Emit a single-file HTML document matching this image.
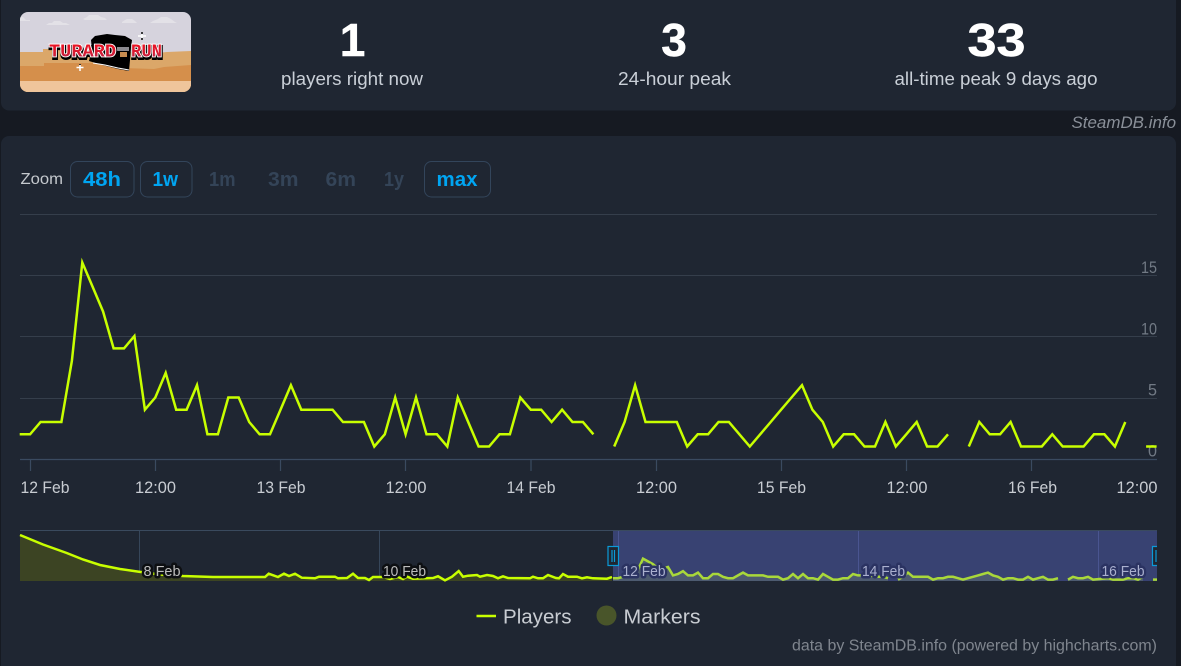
<!DOCTYPE html>
<html><head><meta charset="utf-8"><style>
html,body{margin:0;padding:0;background:#161a22;width:1181px;height:666px;overflow:hidden}
svg{display:block}
text{font-family:"Liberation Sans",sans-serif}
</style></head><body>
<svg width="1181" height="666" viewBox="0 0 1181 666" xmlns="http://www.w3.org/2000/svg">
<defs>
<clipPath id="th"><rect x="20" y="12" width="171" height="80" rx="8"/></clipPath>
<linearGradient id="tg" x1="0" y1="0" x2="0" y2="1"><stop offset="0" stop-color="#ee0f1e"/><stop offset=".55" stop-color="#d41c34"/><stop offset="1" stop-color="#96305f"/></linearGradient>
</defs>
<rect x="1" y="-10" width="1175" height="120.500" rx="8" fill="#1f2632"/>
<rect x="1" y="136" width="1175" height="540" rx="8" fill="#1f2632"/>

<g clip-path="url(#th)">
<rect x="20" y="12" width="171" height="80" fill="#d6d3dd"/>
<path d="M20 17l3 0 3 3h4v1H20z" fill="#e3e1e7"/>
<path d="M46 25l3-2h3l2-2h6l3 2h3l4 2z" fill="#e3e1e7"/>
<path d="M83 19l4-2 2-2h9l3 2 4 1 2 2-3 0H85z" fill="#e3e1e7"/>
<path d="M122 22l3-2 2-1h5l3 2 2 2h-15z" fill="#e3e1e7"/>
<path d="M150 23l3-2 5-2 3-2h6l4 2 4 3 2 1h-27z" fill="#e3e1e7"/>
<path d="M20 52h23v-3h40v3h60l14 1 10-1 24-1v41H20z" fill="#dba769"/>
<path d="M20 66h24v-3h20v0h60v5l30 1 10-2 27-2v27H20z" fill="#d58f4b"/>
<rect x="20" y="81" width="171" height="11" fill="#efc59b"/>
<path d="M91 40L95 36 107 34 115 35 125 36 132 40 131 48 130 60 129 71 118 69 102 65 89 61 92 50z" fill="#000"/>
<path d="M93 63l12 2 13 3 11 2" fill="none" stroke="#fff" stroke-width="1"/>
<rect x="117" y="47" width="12" height="4" fill="#8d8b90"/>
<rect x="120" y="52" width="7" height="5" fill="#c98d50"/>
<path d="M142 32v8M138 36h8M80 64v7M76.500 67.500h7" stroke="#fff" stroke-width="1.500"/>
<path d="M142 32v2M142 38v2M80 64v1" stroke="#000" stroke-width="1.500"/>
<g font-size="18" font-weight="700" style="font-family:'Liberation Mono',monospace">
<text x="49.500" y="58.500" textLength="67" lengthAdjust="spacingAndGlyphs" fill="#000" stroke="#000" stroke-width="3" style="font-family:'Liberation Mono',monospace">TURARD</text>
<text x="131.500" y="58.500" textLength="31" lengthAdjust="spacingAndGlyphs" fill="#000" stroke="#000" stroke-width="3" style="font-family:'Liberation Mono',monospace">RUN</text>
<text x="49" y="56.500" textLength="67" lengthAdjust="spacingAndGlyphs" fill="url(#tg)" stroke="#fff" stroke-width="1.800" paint-order="stroke" style="font-family:'Liberation Mono',monospace">TURARD</text>
<text x="131" y="56.500" textLength="31" lengthAdjust="spacingAndGlyphs" fill="url(#tg)" stroke="#fff" stroke-width="1.800" paint-order="stroke" style="font-family:'Liberation Mono',monospace">RUN</text>
</g>
</g>

<g text-anchor="middle" fill="#fff" font-weight="700" font-size="46" stroke="#fff" stroke-width=".5">
<text x="352.500" y="56">1</text>
<text x="674" y="56">3</text>
<text x="996.500" y="56" textLength="58" lengthAdjust="spacingAndGlyphs">33</text>
</g>
<g fill="#c9cfd7" font-size="18.500">
<text x="281" y="85" textLength="142" lengthAdjust="spacingAndGlyphs">players right now</text>
<text x="618" y="85" textLength="113" lengthAdjust="spacingAndGlyphs">24-hour peak</text>
<text x="894.500" y="85" textLength="203" lengthAdjust="spacingAndGlyphs">all-time peak 9 days ago</text>
</g>
<text x="1071.500" y="128" font-size="16.500" font-style="italic" fill="#8a9099" textLength="104.500" lengthAdjust="spacingAndGlyphs">SteamDB.info</text>

<text x="20.500" y="184" font-size="16" fill="#c5c9ce" textLength="42.500" lengthAdjust="spacingAndGlyphs">Zoom</text>
<g fill="none" stroke="#33455b" stroke-width="1">
<rect x="70.500" y="161.500" width="63.500" height="35.500" rx="7"/>
<rect x="140.500" y="161.500" width="51.500" height="35.500" rx="7"/>
<rect x="424.500" y="161.500" width="66" height="35.500" rx="7"/>
</g>
<g font-size="20.500" font-weight="700">
<g fill="#00a5f2">
<text x="83" y="186" textLength="38" lengthAdjust="spacingAndGlyphs">48h</text>
<text x="152.500" y="186" textLength="25.500" lengthAdjust="spacingAndGlyphs">1w</text>
<text x="436.500" y="186" textLength="41" lengthAdjust="spacingAndGlyphs">max</text>
</g>
<g fill="#344458">
<text x="209" y="186" textLength="26.500" lengthAdjust="spacingAndGlyphs">1m</text>
<text x="268" y="186" textLength="30.500" lengthAdjust="spacingAndGlyphs">3m</text>
<text x="325.500" y="186" textLength="30.500" lengthAdjust="spacingAndGlyphs">6m</text>
<text x="384" y="186" textLength="20" lengthAdjust="spacingAndGlyphs">1y</text>
</g>
</g>

<path d="M20 214.500H1157M20 275.500H1157M20 336.500H1157M20 398.500H1157" stroke="#353e4b" stroke-width="1"/>
<path d="M20 459.500H1157" stroke="#3a4a60" stroke-width="1.200"/>
<path d="M30.500 460V471M155.500 460V471M280.500 460V471M405.500 460V471M531 460V471M656.500 460V471M781.500 460V471M906.500 460V471M1031.500 460V471" stroke="#3a4a60" stroke-width="1.200"/>
<g fill="#727a85" font-size="17">
<text x="1141" y="273" textLength="16" lengthAdjust="spacingAndGlyphs">15</text>
<text x="1141" y="334.500" textLength="16" lengthAdjust="spacingAndGlyphs">10</text>
<text x="1148" y="395.500" textLength="9" lengthAdjust="spacingAndGlyphs">5</text>
<text x="1148" y="456.500" textLength="9" lengthAdjust="spacingAndGlyphs">0</text>
</g>
<g fill="#c8ccd2" font-size="17">
<text x="20.500" y="493" textLength="49" lengthAdjust="spacingAndGlyphs">12 Feb</text>
<text x="135" y="493" textLength="41" lengthAdjust="spacingAndGlyphs">12:00</text>
<text x="256.500" y="493" textLength="49" lengthAdjust="spacingAndGlyphs">13 Feb</text>
<text x="385.500" y="493" textLength="41" lengthAdjust="spacingAndGlyphs">12:00</text>
<text x="506.500" y="493" textLength="49" lengthAdjust="spacingAndGlyphs">14 Feb</text>
<text x="636" y="493" textLength="41" lengthAdjust="spacingAndGlyphs">12:00</text>
<text x="757" y="493" textLength="49" lengthAdjust="spacingAndGlyphs">15 Feb</text>
<text x="886.500" y="493" textLength="41" lengthAdjust="spacingAndGlyphs">12:00</text>
<text x="1008" y="493" textLength="49" lengthAdjust="spacingAndGlyphs">16 Feb</text>
<text x="1116.500" y="493" textLength="41" lengthAdjust="spacingAndGlyphs">12:00</text>
</g>

<g fill="none" stroke="#c8ff00" stroke-width="2.500" stroke-linejoin="miter" transform="translate(-.3,-.7)">
<polyline points="20,435 30.400,435 40.900,422.700 51.300,422.700 61.700,422.700 72.200,361.400 82.600,263.200 93,287.700 103.400,312.300 113.900,349.100 124.300,349.100 134.700,336.800 145.200,410.400 155.600,398.200 166,373.600 176.500,410.400 186.900,410.400 197.300,385.900 207.700,435 218.200,435 228.600,398.200 239,398.200 249.500,422.700 259.900,435 270.300,435 280.800,410.400 291.200,385.900 301.600,410.400 312,410.400 322.500,410.400 332.900,410.400 343.300,422.700 353.800,422.700 364.200,422.700 374.600,447.200 385.100,435 395.500,398.200 405.900,435 416.300,398.200 426.800,435 437.200,435 447.600,447.200 458.100,398.200 468.500,422.700 478.900,447.200 489.400,447.200 499.800,435 510.200,435 520.600,398.200 531.100,410.400 541.500,410.400 551.900,422.700 562.400,410.400 572.800,422.700 583.200,422.700 593.700,435"/>
<polyline points="614.500,447.200 624.900,422.700 635.400,385.900 645.800,422.700 656.200,422.700 666.700,422.700 677.100,422.700 687.500,447.200 698,435 708.400,435 718.800,422.700 729.200,422.700 739.700,435 750.100,447.200 760.500,435 771,422.700 781.400,410.400 791.800,398.200 802.300,385.900 812.700,410.400 823.100,422.700 833.500,447.200 844,435 854.400,435 864.800,447.200 875.300,447.200 885.700,422.700 896.100,447.200 906.600,435 917,422.700 927.400,447.200 937.800,447.200 948.300,435"/>
<polyline points="969.100,447.200 979.600,422.700 990,435 1000.400,435 1010.900,422.700 1021.300,447.200 1031.700,447.200 1042.100,447.200 1052.600,435 1063,447.200 1073.400,447.200 1083.900,447.200 1094.300,435 1104.700,435 1115.200,447.200 1125.600,422.700"/>
<polyline points="1146.400,447.200 1156.900,447.200"/>
</g>

<!-- navigator -->
<rect x="613" y="531" width="544" height="50" fill="#384272"/>
<path d="M20 530.500H1157" stroke="#3a4a5e" stroke-width="1"/>
<path d="M139.500 531V581M379.500 531V581" stroke="#36465a" stroke-width="1"/>
<path d="M618.500 531V581M858.500 531V581M1098.500 531V581" stroke="#4a5590" stroke-width="1"/>

<path d="M20 535L43 544.500 66.700 553 83 559.500 100 565 120 569 139 571.700 160 574.500 183 576 213 577 265 577 268.700 573.700 278 577 284 573.700 289 576 295 573.700 301.700 577.700 315 578.300 319 576.700 335 576.700 338 578.300 347 578 353 573.700 358 578 365 578 369 580 373 577 383 577 390 579 398 577 403 579 407 576.700 413 578.700 425 578.300 433 578 438 576.300 445 580.300 452 576.700 458.700 571 463 576.700 468 575.700 477 575 480 576.700 487 575 493 576 498 578.300 503 576.300 508 578 530 578.300 533 576.700 538 578.300 543 578.300 548 575 556 578 559 578.300 563 574 568 576.700 577 576.700 582 578.300 587 577.300 593 578.300 607 578.700 612 577V581H20Z" fill="#3c4423"/>
<path d="M613 578.200L618 578.200 623 576.800 633 576.800 638 569.800 643 558.600 648 561.400 653 564.200 658 568.400 663 568.400 668 567 673 575.400 678 574 683 571.200 688 575.400 693 575.400 698 572.600 703 578.200 708 578.200 713 574 718 574 723 576.800 728 578.200 733 578.200 738 575.400 743 572.600 748 575.400 763 575.400 768 576.800 778 576.800 783 579.600 788 578.200 793 574 798 578.200 803 574 808 578.200 813 578.200 818 579.600 823 574 828 576.800 833 579.600 838 579.600 843 578.200 848 578.200 853 574 858 575.400 863 575.400 868 576.800 873 575.400 878 576.800 883 576.800 888 578.200V581H613Z" fill="#4d5b70"/>
<path d="M898 579.600L903 576.800 908 572.600 913 576.800 928 576.800 933 579.600 938 578.200 943 578.200 948 576.800 953 576.800 958 578.200 963 579.600 968 578.200 973 576.800 978 575.400 983 574 988 572.600 993 575.400 998 576.800 1003 579.600 1008 578.200 1013 578.200 1018 579.600 1023 579.600 1028 576.800 1033 579.600 1038 578.200 1043 576.800 1048 579.600 1053 579.600 1058 578.200V581H898Z" fill="#4d5b70"/>
<path d="M1068 579.600L1073 576.800 1078 578.200 1083 578.200 1088 576.800 1093 579.600 1108 578.200 1113 579.600 1123 579.600 1128 578.200 1133 578.200 1138 579.600 1143 576.800V581H1068Z" fill="#4d5b70"/>

<polyline fill="none" stroke="#c8ff00" stroke-width="2.500" points="20,535 43,544.500 66.700,553 83,559.500 100,565 120,569 139,571.700 160,574.500 183,576 213,577 265,577 268.700,573.700 278,577 284,573.700 289,576 295,573.700 301.700,577.700 315,578.300 319,576.700 335,576.700 338,578.300 347,578 353,573.700 358,578 365,578 369,580 373,577 383,577 390,579 398,577 403,579 407,576.700 413,578.700 425,578.300 433,578 438,576.300 445,580.300 452,576.700 458.700,571 463,576.700 468,575.700 477,575 480,576.700 487,575 493,576 498,578.300 503,576.300 508,578 530,578.300 533,576.700 538,578.300 543,578.300 548,575 556,578 559,578.300 563,574 568,576.700 577,576.700 582,578.300 587,577.300 593,578.300 607,578.700 612,577"/>
<g fill="none" stroke="#a9d83a" stroke-width="2.500">
<polyline points="613,578.200 618,578.200 623,576.800 633,576.800 638,569.800 643,558.600 648,561.400 653,564.200 658,568.400 663,568.400 668,567 673,575.400 678,574 683,571.200 688,575.400 693,575.400 698,572.600 703,578.200 708,578.200 713,574 718,574 723,576.800 728,578.200 733,578.200 738,575.400 743,572.600 748,575.400 763,575.400 768,576.800 778,576.800 783,579.600 788,578.200 793,574 798,578.200 803,574 808,578.200 813,578.200 818,579.600 823,574 828,576.800 833,579.600 838,579.600 843,578.200 848,578.200 853,574 858,575.400 863,575.400 868,576.800 873,575.400 878,576.800 883,576.800 888,578.200"/>
<polyline points="898,579.600 903,576.800 908,572.600 913,576.800 928,576.800 933,579.600 938,578.200 943,578.200 948,576.800 953,576.800 958,578.200 963,579.600 968,578.200 973,576.800 978,575.400 983,574 988,572.600 993,575.400 998,576.800 1003,579.600 1008,578.200 1013,578.200 1018,579.600 1023,579.600 1028,576.800 1033,579.600 1038,578.200 1043,576.800 1048,579.600 1053,579.600 1058,578.200"/>
<polyline points="1068,579.600 1073,576.800 1078,578.200 1083,578.200 1088,576.800 1093,579.600 1108,578.200 1113,579.600 1123,579.600 1128,578.200 1133,578.200 1138,579.600 1143,576.800"/>
<polyline points="1153,579.600 1157,579.600"/>
</g>

<g font-size="15" stroke-width="5" stroke-linejoin="round">
<g fill="#bdbdbd" stroke="#0d0f12">
<text x="143.500" y="576" textLength="37" lengthAdjust="spacingAndGlyphs" paint-order="stroke">8 Feb</text>
<text x="383" y="576" textLength="43" lengthAdjust="spacingAndGlyphs" paint-order="stroke">10 Feb</text>
</g>
<g fill="#aab0cf" stroke="#2b3362">
<text x="622.500" y="576" textLength="43" lengthAdjust="spacingAndGlyphs" paint-order="stroke">12 Feb</text>
<text x="862" y="576" textLength="43" lengthAdjust="spacingAndGlyphs" paint-order="stroke">14 Feb</text>
<text x="1101.500" y="576" textLength="43" lengthAdjust="spacingAndGlyphs" paint-order="stroke">16 Feb</text>
</g>
</g>

<rect x="608" y="546.500" width="10.500" height="19" fill="#1f2632" stroke="#0b9ad8" stroke-width="1.200"/>
<path d="M612 550V562M614.500 550V562" stroke="#0b9ad8" stroke-width="1.200"/>
<path d="M1157 546.500H1152.500V565.500H1157" fill="#1f2632" stroke="#0b9ad8" stroke-width="1.200"/>
<path d="M1156 550V562" stroke="#0b9ad8" stroke-width="1.200"/>

<path d="M476.500 616H496" stroke="#c8ff00" stroke-width="2.500"/>
<text x="503" y="623.500" font-size="20" fill="#c8ccd2" textLength="68.500" lengthAdjust="spacingAndGlyphs">Players</text>
<circle cx="606.500" cy="615.500" r="10" fill="#49552a"/>
<text x="623.500" y="623.500" font-size="20" fill="#c8ccd2" textLength="77" lengthAdjust="spacingAndGlyphs">Markers</text>
<text x="792" y="650.500" font-size="15.500" fill="#7f858e" textLength="365" lengthAdjust="spacingAndGlyphs">data by SteamDB.info (powered by highcharts.com)</text>
</svg>
</body></html>
